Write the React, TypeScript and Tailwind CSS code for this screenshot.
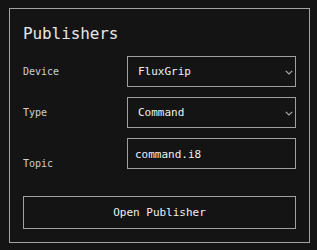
export default function App() {
  return (
    <div
      className="min-h-[250px] w-full bg-[#141414] pl-[9px] pr-[7px] pt-[8px] text-[#e6e6e6]"
      style={{ fontFamily: '"DejaVu Sans Mono", "Liberation Mono", monospace' }}
    >
      <div className="h-[235px] w-[301px] border border-[#a3a3a3] px-[13px] pt-[15px]">
        {/* Title */}
        <h1 className="text-[16px] leading-[20px] tracking-[-0.1px]">Publishers</h1>

        {/* Form */}
        <div className="mt-[12px] flex flex-col gap-[10px]">
          <div className="flex items-center">
            <label className="w-[104px] pt-[1px] text-[10px] leading-[14px] text-[#cfcfcf]">Device</label>
            <div className="relative h-[31px] w-[169px]">
              <select className="h-full w-full appearance-none border border-[#a0a0a0] bg-[#141414] pl-[10px] pt-[2px] text-[11px] text-[#f0f0f0] outline-none">
                <option>FluxGrip</option>
              </select>
              <Chevron />
            </div>
          </div>

          <div className="flex items-center">
            <label className="w-[104px] pt-[1px] text-[10px] leading-[14px] text-[#cfcfcf]">Type</label>
            <div className="relative h-[31px] w-[169px]">
              <select className="h-full w-full appearance-none border border-[#a0a0a0] bg-[#141414] pl-[10px] pt-[2px] text-[11px] text-[#f0f0f0] outline-none">
                <option>Command</option>
              </select>
              <Chevron />
            </div>
          </div>

          <div className="flex items-end">
            <label className="mb-[-2px] w-[104px] text-[10px] leading-[14px] text-[#cfcfcf]">Topic</label>
            <input
              defaultValue="command.i8"
              className="h-[31px] w-[169px] border border-[#a0a0a0] bg-[#141414] pl-[7px] pt-[1px] text-[11px] text-[#f0f0f0] outline-none"
            />
          </div>
        </div>

        <button className="mt-[27px] h-[33px] w-[273px] border border-[#a0a0a0] bg-[#141414] pt-[2px] text-[11px] text-[#f0f0f0]">
          Open Publisher
        </button>
      </div>
    </div>
  );
}

function Chevron() {
  return (
    <svg
      className="pointer-events-none absolute right-[3px] top-[14px]"
      width="8"
      height="5"
      viewBox="0 0 8 5"
      fill="none"
    >
      <path d="M0.8 0.8 L4 4 L7.2 0.8" stroke="#a8a8a8" strokeWidth="1.2" />
    </svg>
  );
}
